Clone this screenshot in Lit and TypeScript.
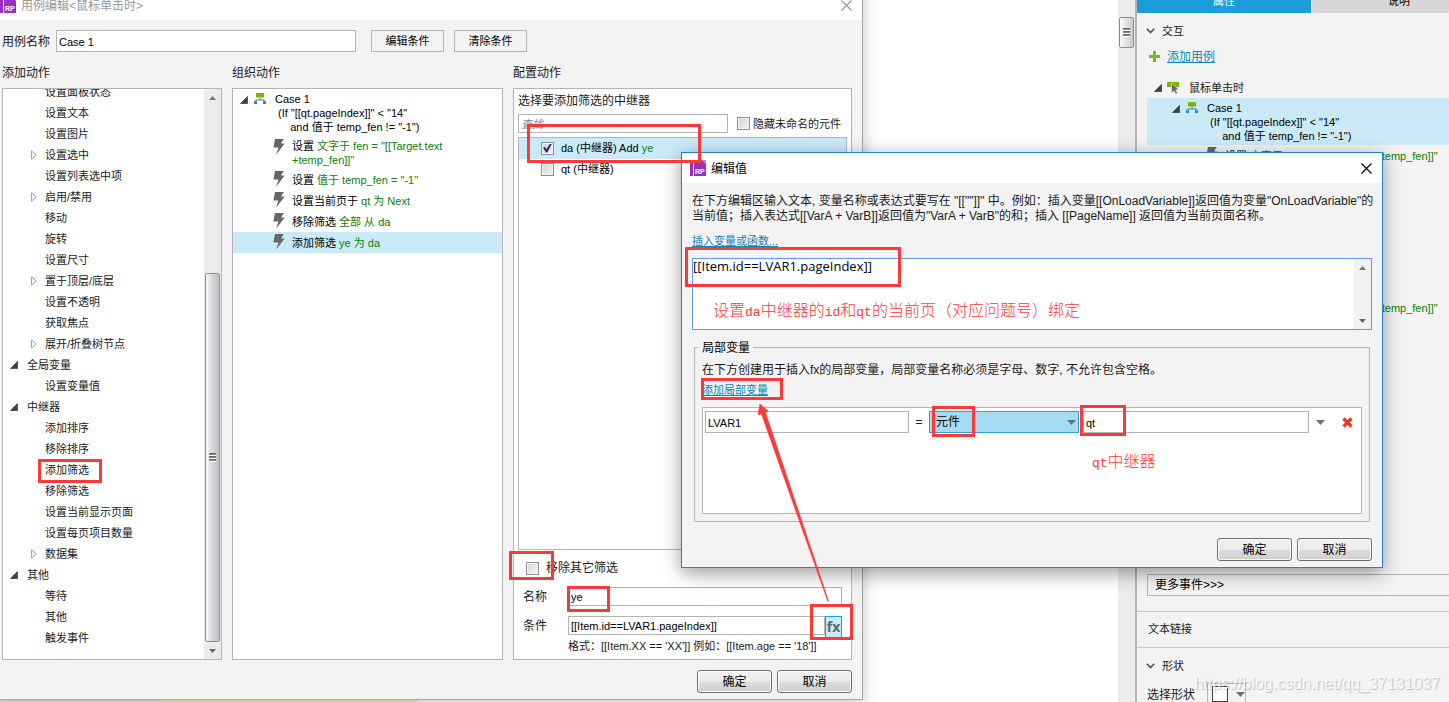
import { LitElement, html, svg, css, nothing } from "lit";
import { customElement, property } from "lit/decorators.js";
import { classMap } from "lit/directives/class-map.js";

const base = css`
  *, *::before, *::after { box-sizing: border-box; }
  :host {
    font-family: "Liberation Sans", "Noto Sans CJK SC", sans-serif;
    font-size: 12px;
    line-height: 15px;
    color: #1a1a1a;
  }
  svg { display: block; flex: none; }
  button, input, select, textarea { font: inherit; color: #000; margin: 0; border-radius: 0; outline: none; }
  input, textarea { padding: 0 2px; border: 1px solid #b4b4b4; background: #fff; min-width: 0; }
  a { color: #0a86bd; text-decoration: underline; }
  .small { font-size: 11px; line-height: 14px; }
  .green { color: #0a800a; }
  input[type="checkbox"] {
    appearance: none;
    width: 13px;
    height: 13px;
    padding: 0;
    flex: none;
    display: grid;
    place-items: center;
    border: 1px solid #8e8f8f;
    background: linear-gradient(135deg, #cfd3da, #f6f6f6);
    box-shadow: inset 0 0 0 1px #f4f4f4;
  }
  input[type="checkbox"]:checked::before {
    content: "";
    width: 9px;
    height: 9px;
    background: #2b2f78;
    clip-path: polygon(0 45%, 22% 38%, 40% 62%, 78% 0, 100% 0, 48% 100%, 32% 100%);
  }
`;

const iconExpanded = svg`<svg width="8" height="8" viewBox="0 0 8 8"><path d="M7.5 .5V7.5H.5Z" fill="#404040" stroke="#222" stroke-width=".6"/></svg>`;
const iconCollapsed = svg`<svg width="6" height="10" viewBox="0 0 6 10"><path d="M.6 .9L5.2 5L.6 9.1Z" fill="#fff" stroke="#9a9a9a"/></svg>`;
const iconCase = svg`<svg width="12" height="12" viewBox="0 0 12 12"><path d="M2 0H10V4.500H2Z" fill="#76b900"/><path d="M5.500 5H6.500V6.500H10.500V8H9.500V7.500H2.500V8H1.500V6.500H5.500Z" fill="#777"/><path d="M0 8H3V11H0ZM9 8H12V11H9Z" fill="#109ad8"/></svg>`;
const iconBolt = svg`<svg width="12" height="16" viewBox="0 0 12 16"><path d="M2 0H10.800L8 4.600H11.700L3.200 15.600L5.400 8.600H.4Z" fill="#666"/></svg>`;
const iconMouse = svg`<svg width="12" height="12" viewBox="0 0 12 12"><path d="M0 0H12V5H0Z" fill="#76b900"/><path d="M4.500 .8L11.800 7.800H8.900L10.600 11.200L8.600 12L7 8.900L4.500 10.900Z" fill="#666" stroke="#f3f3f3" stroke-width=".6"/></svg>`;
const iconChevron = svg`<svg width="9" height="6" viewBox="0 0 9 6"><path d="M.8 .8L4.500 4.500L8.200 .8" fill="none" stroke="#4a4f5a" stroke-width="1.600"/></svg>`;
const iconPlus = svg`<svg width="11" height="11" viewBox="0 0 11 11"><path d="M4 0H7V4H11V7H7V11H4V7H0V4H4Z" fill="#7ab52a"/></svg>`;
const iconUp = svg`<svg width="7" height="4" viewBox="0 0 7 4"><path d="M0 4L3.500 0L7 4Z" fill="#777"/></svg>`;
const iconDown = svg`<svg width="7" height="4" viewBox="0 0 7 4"><path d="M0 0H7L3.500 4Z" fill="#666"/></svg>`;
const iconDrop = svg`<svg width="9" height="5" viewBox="0 0 9 5"><path d="M0 0H9L4.500 5Z" fill="#707070"/></svg>`;
const iconDelete = svg`<svg width="11" height="11" viewBox="0 0 11 11"><path d="M1.500 1.500L9.500 9.500M9.500 1.500L1.500 9.500" stroke="#f2311f" stroke-width="3.200"/></svg>`;
const iconApp = svg`<svg width="16" height="16" viewBox="0 0 16 16"><path d="M0 0H16V16H0Z" fill="#9b2fc0"/><path d="M11.500 0H16V4.500Z" fill="#c684da"/><path d="M3 0H4V16H3Z" fill="#fff"/><text x="5" y="14" font-family="Liberation Sans" font-weight="700" font-size="7" fill="#fff">RP</text></svg>`;
const iconClose = svg`<svg width="11" height="11" viewBox="0 0 11 11"><path d="M.5 .5L10.500 10.500M10.500 .5L.5 10.500" stroke="currentColor" stroke-width="1.200"/></svg>`;
const iconGrip = svg`<svg width="7" height="9" viewBox="0 0 7 9"><path d="M0 1H7M0 4H7M0 7H7" stroke="#444" stroke-width="1.400"/><path d="M0 2.300H7M0 5.300H7M0 8.300H7" stroke="#fff" stroke-width="1"/></svg>`;

@customElement("rp-dialog")
class RpDialog extends LitElement {
  @property() heading = "";
  @property({ type: Boolean, reflect: true }) inactive = false;

  static styles = [base, css`
    :host {
      display: flex;
      flex-direction: column;
      box-sizing: border-box;
      background: #f3f3f3;
      border: 1px solid #1c83d2;
      box-shadow: 0 5px 18px rgba(0, 0, 0, 0.4);
    }
    :host([inactive]) { border-color: #a6a6a6; box-shadow: 0 2px 14px rgba(0, 0, 0, 0.25); }
    .bar { display: flex; align-items: center; gap: 5px; height: 30px; flex: none; padding: 0 10px 0 8px; background: #fff; color: #000; }
    .title { flex: 1; padding-top: 2px; }
    .close { border: 0; padding: 0; background: none; color: #000; }
    :host([inactive]) .title, :host([inactive]) .close { color: #999; }
    .body { flex: 1; min-height: 0; display: flex; flex-direction: column; padding: 10px 10px 6px; }
    .foot { display: flex; justify-content: flex-end; gap: 5px; margin-top: auto; }
    .push {
      width: 75px;
      height: 23px;
      padding: 2px 0 0;
      border: 1px solid #707070;
      border-radius: 3px;
      background: linear-gradient(#f3f3f3, #ebebeb 50%, #dcdcdc 51%, #cfcfcf);
      box-shadow: inset 0 0 0 1px #fafafa;
    }
  `];

  render() {
    return html`
      <div class="bar">
        ${iconApp}<span class="title">${this.heading}</span>
        <button class="close" aria-label="Close">${iconClose}</button>
      </div>
      <div class="body">
        <slot></slot>
        <div class="foot"><button class="push">确定</button><button class="push">取消</button></div>
      </div>`;
  }
}

interface TreeItem { text: string; level: number; state?: "open" | "closed"; }

const actions: TreeItem[] = [
  { text: "设置面板状态", level: 1 },
  { text: "设置文本", level: 1 },
  { text: "设置图片", level: 1 },
  { text: "设置选中", level: 1, state: "closed" },
  { text: "设置列表选中项", level: 1 },
  { text: "启用/禁用", level: 1, state: "closed" },
  { text: "移动", level: 1 },
  { text: "旋转", level: 1 },
  { text: "设置尺寸", level: 1 },
  { text: "置于顶层/底层", level: 1, state: "closed" },
  { text: "设置不透明", level: 1 },
  { text: "获取焦点", level: 1 },
  { text: "展开/折叠树节点", level: 1, state: "closed" },
  { text: "全局变量", level: 0, state: "open" },
  { text: "设置变量值", level: 1 },
  { text: "中继器", level: 0, state: "open" },
  { text: "添加排序", level: 1 },
  { text: "移除排序", level: 1 },
  { text: "添加筛选", level: 1 },
  { text: "移除筛选", level: 1 },
  { text: "设置当前显示页面", level: 1 },
  { text: "设置每页项目数量", level: 1 },
  { text: "数据集", level: 1, state: "closed" },
  { text: "其他", level: 0, state: "open" },
  { text: "等待", level: 1 },
  { text: "其他", level: 1 },
  { text: "触发事件", level: 1 },
];

const steps = [
  { verb: "设置", target: '文字于 fen = "[[Target.text +temp_fen]]"' },
  { verb: "设置", target: '值于 temp_fen = "-1"' },
  { verb: "设置当前页于", target: "qt 为 Next" },
  { verb: "移除筛选", target: "全部 从 da" },
  { verb: "添加筛选", target: "ye 为 da", active: true },
];

const caseStyles = css`
  .case { display: flex; padding: 3px 0 2px; color: #000; }
  .case > svg { margin-top: 4px; }
  .case > svg:nth-child(2) { margin: 1px 9px 0 6px; }
  .case p { margin: 0; padding-left: 3px; white-space: pre; }
  .step { display: flex; align-items: center; min-height: 21px; padding: 2px 0; color: #000; }
  .step.tall { padding: 3px 0 2px; }
  .step > svg { align-self: flex-start; margin: 0 7px -1px 0; }
`;

const caseBlock = () => html`
  ${iconExpanded}${iconCase}
  <div>Case 1<p>(If "[[qt.pageIndex]]" &lt; "14"
    and 值于 temp_fen != "-1")</p></div>`;

@customElement("case-editor")
class CaseEditor extends LitElement {
  static styles = [base, caseStyles, css`
    :host { flex: 1; min-height: 0; display: flex; flex-direction: column; margin-bottom: 10px; }
    .name { display: flex; align-items: center; height: 22px; }
    .name label { margin-right: 6px; padding-top: 2px; }
    .name input { width: 300px; height: 22px; margin-right: 15px; padding-top: 2px; }
    .flat { width: 73px; height: 22px; padding: 0; margin-right: 10px; border: 1px solid #b4b4b4; background: #f3f3f3; }
    .cols { flex: 1; min-height: 0; display: grid; grid-template: auto 1fr / 220px 271px 1fr; gap: 7px 10px; margin-top: 14px; }
    h2 { margin: 0; font-size: 12px; line-height: 15px; font-weight: 400; }
    .panel { min-height: 0; border: 1px solid #b4b4b4; background: #fff; overflow: hidden; }
    .tree { display: flex; }
    .rows { flex: 1; display: flex; flex-direction: column; justify-content: flex-end; padding-bottom: 11px; }
    .row { display: flex; align-items: center; flex: none; height: 21px; }
    .twist { width: 24px; display: grid; justify-items: center; padding-right: 2px; }
    .row.l1 .twist { margin-left: 20px; width: 22px; padding-right: 1px; }
    .scroll { width: 17px; display: flex; flex-direction: column; background: #ececec; }
    .cap { height: 17px; display: grid; place-items: center; }
    .room { flex: 167; }
    .thumb {
      flex: 368;
      margin: 0 1px;
      display: grid;
      place-items: center;
      border: 1px solid #8b8b8b;
      border-radius: 2px;
      background: linear-gradient(90deg, #fafafa, #d4d5d8 50%, #bfc2c6);
    }
    .flow .case { padding-left: 7px; }
    .flow .step { padding-left: 40px; }
    .flow .active { background: #cbeaf7; }
    .config { display: flex; flex-direction: column; padding: 5px 4px 6px; }
    .find { display: flex; align-items: center; margin: 5px 0 4px; height: 19px; }
    .find input[type="text"] { width: 210px; height: 19px; margin-right: 9px; }
    .find label { margin-left: 3px; }
    ::placeholder { color: #888; font-style: italic; }
    .targets { flex: 1; border: 1px solid #b4b4b4; }
    .target { display: flex; align-items: center; gap: 7px; height: 21px; padding: 0 0 1px 22px; color: #000; }
    .target.on { background: #cbeaf7; }
    .remove { display: flex; align-items: center; gap: 7px; height: 37px; padding-left: 8px; }
    .form { display: grid; grid-template-columns: 45px 1fr; align-items: center; row-gap: 10px; padding: 0 5px; }
    .form label { padding-top: 1px; }
    .form > div { display: flex; align-items: flex-start; height: 19px; }
    .form input { flex: 1; height: 19px; }
    .fx {
      width: 17px;
      height: 22px;
      padding: 0;
      border: 1px solid #1c9ed9;
      background: #cbeaf7;
      color: #666;
      font: 700 14px/20px "Open Sans", sans-serif;
      display: flex;
      justify-content: center;
    }
    .form p { grid-column: 2; margin: -6px 0 0; white-space: nowrap; }
  `];

  render() {
    return html`
      <div class="name">
        <label for="name">用例名称</label><input id="name" class="small" type="text" value="Case 1" />
        <button class="flat small">编辑条件</button><button class="flat small">清除条件</button>
      </div>
      <div class="cols">
        <h2>添加动作</h2><h2>组织动作</h2><h2>配置动作</h2>
        <div class="panel tree small">
          <div class="rows">
            ${actions.map((a) => html`
              <div class=${classMap({ row: true, l1: a.level === 1 })}>
                <span class="twist">${a.state === "open" ? iconExpanded : a.state === "closed" ? iconCollapsed : nothing}</span>${a.text}
              </div>`)}
          </div>
          <div class="scroll">
            <div class="cap">${iconUp}</div><div class="room"></div>
            <div class="thumb">${iconGrip}</div>
            <div class="cap">${iconDown}</div>
          </div>
        </div>
        <div class="panel flow small">
          <div class="case">${caseBlock()}</div>
          ${steps.map((s, i) => html`
            <div class=${classMap({ step: true, tall: i === 0, active: !!s.active })}>
              ${iconBolt}<span>${s.verb} <span class="green">${s.target}</span></span>
            </div>`)}
        </div>
        <div class="panel config">
          <div>选择要添加筛选的中继器</div>
          <div class="find small">
            <input type="text" placeholder="查找" aria-label="查找" />
            <input id="hide" type="checkbox" /><label for="hide">隐藏未命名的元件</label>
          </div>
          <div class="targets small">
            <div class="target on"><input id="da" type="checkbox" checked /><label for="da">da (中继器) Add <span class="green">ye</span></label></div>
            <div class="target"><input id="qt" type="checkbox" /><label for="qt">qt (中继器)</label></div>
          </div>
          <div class="remove"><input id="rm" type="checkbox" /><label for="rm">移除其它筛选</label></div>
          <div class="form">
            <label for="fname">名称</label><div><input id="fname" class="small" type="text" value="ye" /></div>
            <label for="cond">条件</label>
            <div><input id="cond" class="small" type="text" value="[[Item.id==LVAR1.pageIndex]]" /><button class="fx">fx</button></div>
            <p class="small">格式：[[Item.XX == 'XX']] 例如：[[Item.age == '18']]</p>
          </div>
        </div>
      </div>`;
  }
}

@customElement("value-editor")
class ValueEditor extends LitElement {
  static styles = [base, css`
    :host { display: block; padding-top: 1px; }
    .tip { margin: 0; white-space: nowrap; }
    .insert { display: block; margin: 10px 0; }
    .code { display: flex; height: 72px; border: 1px solid #569de5; background: #fff; }
    .code textarea { flex: 1; border: 0; padding: 0; resize: none; overflow: hidden; font: 13px/15px "Open Sans", sans-serif; }
    .scroll { width: 17px; display: flex; flex-direction: column; justify-content: space-between; background: #f2f2f2; }
    .cap { height: 17px; display: grid; place-items: center; }
    fieldset { margin: 9px 2px 0; padding: 7px 7px; border: 1px solid #b4b4b4; min-width: 0; }
    legend { padding: 2px 3px 0 4px; margin-left: -4px; color: #000; }
    fieldset p { margin: 0 0 5px; }
    .add { display: block; width: max-content; margin-bottom: 10px; }
    .vars { height: 107px; padding: 3px 8px 0 2px; border: 1px solid #b4b4b4; background: #fff; }
    .var { display: flex; align-items: center; }
    .var input { height: 22px; padding-top: 2px; }
    .left { width: 204px; }
    .eq { width: 20px; text-align: center; }
    .right { flex: 1; margin-left: 4px; }
    .pick { width: 150px; display: grid; align-items: center; }
    .pick > * { grid-area: 1 / 1; }
    .pick svg { justify-self: end; margin-right: 3px; pointer-events: none; }
    select { appearance: none; height: 22px; width: 100%; padding: 0 6px; border: 1px solid #2ba3da; background: #a6dcf2; }
    .icon { border: 0; padding: 0; background: none; margin-left: 7px; }
    .del { margin: 0 0 0 17px; }
  `];

  render() {
    return html`
      <p class="tip">在下方编辑区输入文本, 变量名称或表达式要写在 "[[""]]" 中。例如：插入变量[[OnLoadVariable]]返回值为变量"OnLoadVariable"的<br />当前值；插入表达式[[VarA + VarB]]返回值为"VarA + VarB"的和；插入 [[PageName]] 返回值为当前页面名称。</p>
      <a class="insert small" href="#">插入变量或函数...</a>
      <div class="code">
        <textarea aria-label="编辑值" .value=${"[[Item.id==LVAR1.pageIndex]]"}></textarea>
        <div class="scroll"><div class="cap">${iconUp}</div><div class="cap">${iconDown}</div></div>
      </div>
      <fieldset>
        <legend>局部变量</legend>
        <p>在下方创建用于插入fx的局部变量，局部变量名称必须是字母、数字, 不允许包含空格。</p>
        <a class="add small" href="#">添加局部变量</a>
        <div class="vars">
          <div class="var">
            <input class="left small" type="text" value="LVAR1" aria-label="局部变量" />
            <span class="eq">=</span>
            <div class="pick"><select aria-label="元件"><option>元件</option></select>${iconDrop}</div>
            <input class="right small" type="text" value="qt" aria-label="qt" />
            <button class="icon" aria-label="▾">${iconDrop}</button>
            <button class="icon del" aria-label="×">${iconDelete}</button>
          </div>
        </div>
      </fieldset>`;
  }
}

@customElement("side-panel")
class SidePanel extends LitElement {
  static styles = [base, caseStyles, css`
    :host { display: block; overflow: hidden; background: #f3f3f3; white-space: nowrap; }
    .tabs { display: flex; align-items: flex-end; gap: 1px; height: 13px; overflow: hidden; }
    .tab { flex: none; width: 174px; height: 25px; padding: 0; border: 0; background: #d6d6d6; }
    .tab.on { background: #1b9dd9; color: #fff; }
    .head { display: flex; align-items: center; gap: 7px; height: 35px; padding-left: 9px; }
    .new { display: flex; align-items: center; gap: 7px; height: 17px; padding-left: 12px; }
    .new a { padding-top: 2px; }
    .event { display: flex; align-items: center; height: 21px; margin-top: 12px; padding-left: 17px; }
    .event svg + svg { margin: 0 10px 0 5px; }
    .on-case { margin-left: 10px; padding-left: 25px; background: #cbeaf7; }
    .step { padding-left: 69px; height: 21px; }
    .again { margin-top: 131px; }
    .more { display: block; width: 100%; height: 22px; margin: 256px 0 0 10px; padding: 0 7px; border: 1px solid #b4b4b4; background: #f3f3f3; text-align: left; }
    .link { height: 37px; margin-top: 15px; padding: 0 11px; line-height: 35px; border: solid #c8c8c8; border-width: 1px 0; }
    .shape { display: flex; gap: 12px; padding-left: 10px; }
    .shape span { padding-top: 5px; }
    .swatch { display: flex; align-items: center; gap: 8px; width: 39px; height: 22px; padding: 0 0 0 4px; border: 1px solid #b4b4b4; background: #f3f3f3; }
    .box { width: 16px; height: 16px; border: 1px solid #444; background: #fff; }
  `];

  private step(extra = "") {
    return html`<div class="step small ${extra}">${iconBolt}<span>设置 <span class="green">文字于 fen = "[[Target.text+temp_fen]]"</span></span></div>`;
  }

  render() {
    return html`
      <div class="tabs"><button class="tab on small">属性</button><button class="tab small">说明</button></div>
      <div class="head small">${iconChevron}交互</div>
      <div class="new">${iconPlus}<a href="#">添加用例</a></div>
      <div class="event small">${iconExpanded}${iconMouse}鼠标单击时</div>
      <div class="case on-case small">${caseBlock()}</div>
      ${this.step()}
      ${this.step("again")}
      <button class="more">更多事件&gt;&gt;&gt;</button>
      <div class="link small">文本链接</div>
      <div class="head small">${iconChevron}形状</div>
      <div class="shape"><span>选择形状</span><button class="swatch" aria-label="选择形状"><i class="box"></i>${iconDrop}</button></div>`;
  }
}

const marks = [
  [38, 459, 64, 24],
  [527, 124, 174, 39],
  [509, 551, 45, 29],
  [567, 586, 43, 26],
  [810, 604, 43, 36],
  [685, 247, 216, 40],
  [701, 378, 82, 22],
  [932, 406, 43, 31],
  [1080, 405, 46, 31],
];

@customElement("app-root")
class AppRoot extends LitElement {
  static styles = [base, css`
    :host { display: block; position: relative; height: 100vh; overflow: hidden; background: #fff; }
    .workspace { display: flex; height: 100%; }
    .canvas { flex: 1; display: flex; align-items: flex-end; }
    .edge { width: 160px; height: 3px; background: #e4e4e4; }
    .edge.note { width: 258px; background: #f0f0b8; }
    .track { width: 17px; padding: 17px 1px 0; background: #ececec; }
    .thumb { height: 31px; display: grid; place-items: center; border: 1px solid #8b8b8b; border-radius: 2px; background: linear-gradient(90deg, #fafafa, #c8cacd); }
    side-panel { width: 314px; border-left: 2px solid #b4b4b4; }
    .case-window { position: absolute; left: -9px; top: -11px; width: 872px; height: 711px; }
    .value-window { position: absolute; left: 681px; top: 152px; width: 702px; height: 416px; }
    .marks { position: absolute; left: 0; top: 0; pointer-events: none; }
    .note-text { position: absolute; color: #fb3a3a; font-size: 16px; line-height: 20px; white-space: nowrap; font-family: "Noto Sans CJK SC", sans-serif; font-weight: 300; }
    .note-text span { font-family: "Liberation Mono", monospace; font-size: 13px; }
    .filter-note { left: 713px; top: 299px; }
    .qt-note { left: 1092px; top: 450px; }
    .watermark { position: absolute; right: 9px; bottom: 8px; font-size: 16px; line-height: 20px; color: rgba(255, 255, 255, 0.75); text-shadow: 1px 1px 1px rgba(0, 0, 0, 0.22); }
  `];

  render() {
    return html`
      <div class="workspace">
        <div class="canvas"><div class="edge"></div><div class="edge note"></div></div>
        <div class="track"><div class="thumb">${iconGrip}</div></div>
        <side-panel></side-panel>
      </div>
      <rp-dialog class="case-window" heading="用例编辑<鼠标单击时>" inactive><case-editor></case-editor></rp-dialog>
      <rp-dialog class="value-window" heading="编辑值"><value-editor></value-editor></rp-dialog>
      <svg class="marks" width="1449" height="702" viewBox="0 0 1449 702">
        ${marks.map(([x, y, w, h]) => svg`<rect x=${x + 1.5} y=${y + 1.5} width=${w - 3} height=${h - 3} fill="none" stroke="#fb3939" stroke-width="3"/>`)}
        <path d="M760 404L768 411L765.500 412.500L828.500 601L827.800 601.300L761.500 414L758 414.500Z" fill="#fb3939" stroke="#fb3939" stroke-width=".6"/>
      </svg>
      <div class="note-text filter-note">设置<span>da</span>中继器的<span>id</span>和<span>qt</span>的当前页（对应问题号）绑定</div>
      <div class="note-text qt-note"><span>qt</span>中继器</div>
      <div class="watermark">https://blog.csdn.net/qq_37131037</div>`;
  }
}
